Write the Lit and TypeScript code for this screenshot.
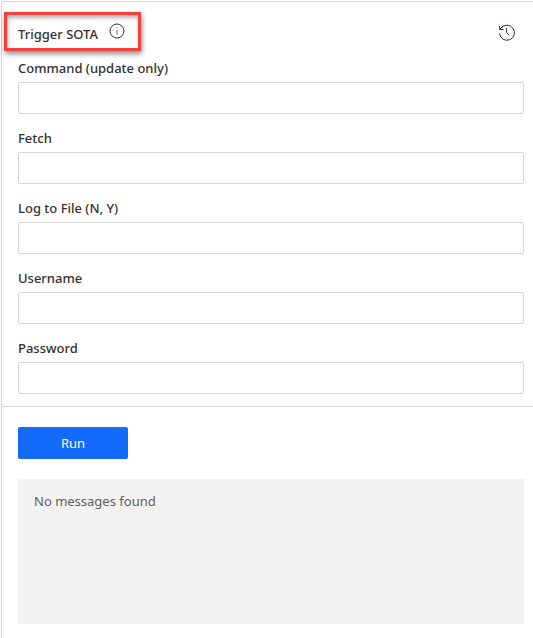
import { LitElement, html, css } from "lit";
import { customElement, state } from "lit/decorators.js";

interface Field {
  id: string;
  label: string;
  type: string;
}

const FIELDS: Field[] = [
  { id: "command", label: "Command (update only)", type: "text" },
  { id: "fetch", label: "Fetch", type: "text" },
  { id: "log", label: "Log to File (N, Y)", type: "text" },
  { id: "username", label: "Username", type: "text" },
  { id: "password", label: "Password", type: "password" },
];

@customElement("app-root")
export class AppRoot extends LitElement {
  @state() private message = "No messages found";

  static styles = css`
    :host {
      display: block;
      box-sizing: border-box;
      min-height: 100vh;
      padding: 1px 0 0 1px;
      background: #fff;
      color: #323130;
      font: 13px/20px "Noto Sans", "Open Sans", sans-serif;
    }
    .panel {
      box-sizing: border-box;
      min-height: calc(100vh - 1px);
      border: 1px solid #d6d6d6;
      border-width: 1px 0 0 1px;
      border-top-left-radius: 2px;
    }
    .form {
      padding: 0 9px 12px 16px;
      border-bottom: 1px solid #d6d6d6;
    }
    .header {
      display: flex;
      align-items: center;
      justify-content: space-between;
      padding: 10px 8px 7px 0;
    }
    .title {
      display: flex;
      align-items: center;
      gap: 11px;
      box-sizing: border-box;
      height: 39px;
      margin-left: -14px;
      padding: 0 13px 0 11px;
      border: 3px solid #f93e3e;
      box-shadow: 1px 3px 5px rgba(0, 0, 0, 0.45), inset 1px 3px 4px rgba(0, 0, 0, 0.3);
    }
    h1 {
      margin: 0;
      padding-top: 4px;
      font-size: 13px;
      line-height: 20px;
      font-weight: 500;
    }
    .icon {
      display: block;
      padding: 0;
      border: 0;
      background: none;
      color: #323130;
      cursor: pointer;
    }
    .info {
      align-self: flex-start;
      margin-top: 8px;
    }
    svg {
      display: block;
      fill: none;
      stroke: currentColor;
    }
    .fields {
      display: grid;
      gap: 14px;
    }
    .field {
      display: grid;
      gap: 4px;
    }
    label {
      font-weight: 500;
    }
    input {
      box-sizing: border-box;
      width: 100%;
      height: 32px;
      padding: 0 8px;
      border: 1px solid #d6d6d6;
      border-radius: 2px;
      background: #fff;
      color: inherit;
      font: inherit;
    }
    .output {
      display: grid;
      justify-items: start;
      gap: 20px;
      padding: 20px 9px 12px 16px;
    }
    .run {
      min-width: 110px;
      height: 32px;
      padding: 0 16px;
      border: 0;
      border-radius: 2px;
      background: #136bfb;
      color: #fff;
      font: inherit;
      cursor: pointer;
    }
    .messages {
      box-sizing: border-box;
      width: 100%;
      min-height: 145px;
      padding: 12px 16px;
      background: #f3f2f1;
      color: #605e5c;
    }
  `;

  render() {
    return html`
      <section class="panel">
        <div class="form">
          <header class="header">
            <div class="title">
              <h1>Trigger SOTA</h1>
              <button class="icon info" aria-label="Information">
                <svg width="16" height="16" viewBox="0 0 16 16">
                  <circle cx="8" cy="8" r="7" />
                  <path d="M8 7v5M8 4v1" stroke="#8a6a4c" />
                </svg>
              </button>
            </div>
            <button class="icon" aria-label="Command history">
              <svg width="18" height="18" viewBox="0 0 18 18">
                <path d="M1.5 10.5A7.5 7.5 0 1 0 3 5.2" />
                <path d="M1.5 3v3.5H5.5M1.8 6.2l3-3" />
                <path d="M8.5 5v4.5l3 3" stroke="#5a3560" />
              </svg>
            </button>
          </header>
          <div class="fields">
            ${FIELDS.map(
              (f) => html`
                <div class="field">
                  <label for=${f.id}>${f.label}</label>
                  <input id=${f.id} type=${f.type} autocomplete="off" />
                </div>
              `
            )}
          </div>
        </div>
        <div class="output">
          <button class="run">Run</button>
          <div class="messages" role="status">${this.message}</div>
        </div>
      </section>
    `;
  }
}
